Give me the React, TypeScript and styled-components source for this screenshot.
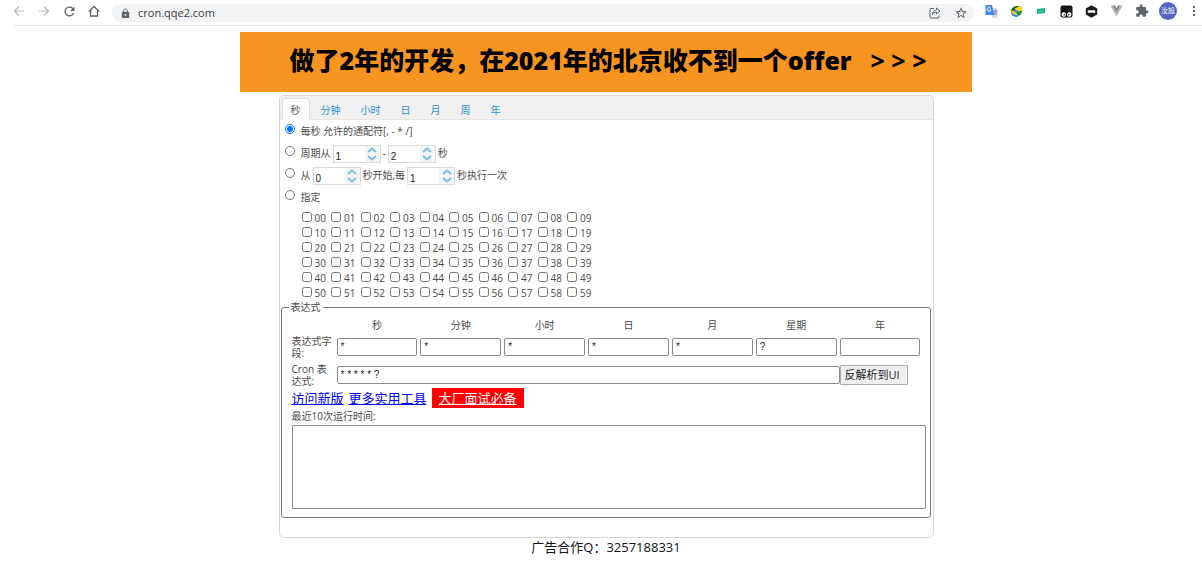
import React from "react";
import styled, { createGlobalStyle } from "styled-components";
import { MdExtension, MdLock, MdRefresh, MdStarOutline } from "react-icons/md";

const Global = createGlobalStyle`
  *, *::before, *::after { box-sizing: border-box; }
  body {
    margin: 0;
    background: #fff;
    color: #4a4a4a;
    font: 10px/12px "Open Sans", "Noto Sans CJK SC", sans-serif;
  }
  button, input, textarea { font: inherit; color: inherit; margin: 0; }
`;

const Toolbar = styled.header`
  display: flex;
  align-items: center;
  height: 26px;
  margin-left: 14px;
  padding-bottom: 3px;
  border-bottom: 1px solid #e6e6e8;
`;
const NavGroup = styled.nav`
  display: flex;
  gap: 9px;
  margin-left: -3px;
  width: 101px;
`;
const IconButton = styled.button<{ $color?: string }>`
  display: flex;
  align-items: center;
  justify-content: center;
  width: 16px;
  height: 16px;
  padding: 0;
  border: 0;
  background: none;
  color: ${(p) => p.$color ?? "#5f6368"};
`;
const AddressBar = styled.div`
  display: flex;
  align-items: center;
  flex: 1;
  height: 18px;
  margin-top: 4px;
  padding: 0 5px 0 8px;
  gap: 7px;
  border-radius: 7px 7px 9px 9px;
  background: #f1f3f4;
  color: #5f6368;
`;
const Address = styled.input`
  flex: 1;
  min-width: 0;
  height: 16px;
  padding: 0 0 2px;
  border: 0;
  outline: 0;
  background: none;
  color: #3c4043;
  font-size: 11px;
`;
const AddressActions = styled.div`
  display: flex;
  gap: 10px;
`;
const Extensions = styled.div`
  display: flex;
  align-items: center;
  justify-content: space-between;
  width: 219px;
  margin-left: 9px;
`;
const Avatar = styled.button`
  width: 18px;
  height: 18px;
  padding: 0;
  border: 0;
  border-radius: 50%;
  background: #5563c1;
  color: #fff;
  font-size: 7px;
  line-height: 18px;
`;

const Page = styled.main`
  display: flex;
  flex-direction: column;
  align-items: center;
  padding: 6px 0 12px 10px;
`;
const Banner = styled.a`
  display: flex;
  align-items: center;
  justify-content: center;
  gap: 19px;
  width: 100%;
  max-width: 732px;
  height: 60px;
  padding: 0 0 4px 4px;
  background: #f89520;
  color: #000;
  font: 800 25px/30px "Open Sans", "Noto Sans CJK SC", sans-serif;
  text-decoration: none;
  white-space: nowrap;
`;
const BannerArrows = styled.span`
  font-weight: 700;
`;
const Panel = styled.section`
  width: 100%;
  max-width: 655px;
  margin-top: 3px;
  padding-bottom: 19px;
  border: 1px solid #d8d8d8;
  border-radius: 5px;
`;
const Tabs = styled.div`
  display: flex;
  align-items: flex-end;
  height: 24px;
  padding-left: 1px;
  border-bottom: 1px solid #e4e4e4;
  border-radius: 4px 4px 0 0;
  background: #f0f0f0;
`;
const Tab = styled.button<{ $active: boolean }>`
  height: 22px;
  margin: 0 1px -1px;
  padding: 0 8px;
  border: 1px solid ${(p) => (p.$active ? "#ddd" : "transparent")};
  border-bottom: 0;
  border-radius: 4px 4px 0 0;
  background: ${(p) => (p.$active ? "#fff" : "none")};
  color: ${(p) => (p.$active ? "#555" : "#2a8fd0")};
`;
const Options = styled.div`
  padding: 0 5px;
`;
const Row = styled.div`
  display: flex;
  align-items: center;
  gap: 2px;
  height: 22px;
`;
const Radio = styled.input`
  width: 10px;
  height: 10px;
  && { margin: 0 4px 4px 0; }
`;
const SpinBox = styled.span`
  display: flex;
  width: 48px;
  height: 18px;
  margin-top: 2px;
  border: 1px solid #dcdcdc;
  background: #f5f5f5;
`;
const SpinInput = styled.input`
  flex: 1;
  min-width: 0;
  padding: 5px 0 0 2px;
  border: 0;
  background: #fff;
  color: #222;
  font-family: "Liberation Sans", sans-serif;
`;
const SpinButtons = styled.span`
  display: flex;
  flex-direction: column;
  width: 15px;
`;
const SpinButton = styled.button`
  display: flex;
  align-items: center;
  justify-content: center;
  height: 8px;
  padding: 0;
  border: 0;
  background: none;
`;
const Ticks = styled.div`
  display: grid;
  grid-template-columns: repeat(10, 1fr);
  width: 295px;
  margin: 2px 0 0 17px;
`;
const Tick = styled.label`
  display: flex;
  align-items: center;
  gap: 3px;
  height: 15px;
`;
const Check = styled.input`
  width: 10px;
  height: 10px;
  && { margin: 0 0 2px; }
`;

const Group = styled.fieldset`
  margin: 1px 2px 0 1px;
  padding: 6px 4px 8px 10px;
  border: 1px solid #777;
  border-radius: 3px;
`;
const Legend = styled.legend`
  margin-left: -3px;
  padding: 0 2px;
`;
const Fields = styled.div`
  display: grid;
  grid-template-columns: 42px repeat(7, 1fr);
  column-gap: 3px;
  align-items: end;
  margin-right: 5px;
`;
const Caption = styled.span`
  display: block;
  line-height: 12px;
`;
const Field = styled.label`
  display: flex;
  flex-direction: column;
  gap: 7px;
  padding-bottom: 3px;
  text-align: center;
`;
const Box = styled.input`
  width: 100%;
  height: 18px;
  padding: 0 3px 1px;
  border: 1px solid #8a8a8a;
  border-radius: 2px;
  background: #fff;
  color: #222;
  font-family: "Liberation Sans", sans-serif;
`;
const CronRow = styled.div`
  display: flex;
  align-items: center;
  margin: 4px 18px 0 0;
`;
const CronLabel = styled.label`
  flex: none;
  width: 36px;
  margin-right: 9px;
`;
const ParseButton = styled.button`
  flex: none;
  width: 68px;
  height: 20px;
  padding: 0 3px 1px 0;
  border: 1px solid #aaa;
  border-radius: 1px;
  background: #efefef;
  color: #222;
  font-size: 11px;
`;
const Links = styled.div`
  display: flex;
  align-items: center;
  gap: 5px;
  margin-top: 1px;
  font-size: 13px;
  line-height: 20px;
`;
const Link = styled.a<{ $hot?: boolean }>`
  padding: ${(p) => (p.$hot ? "0 7px" : "0")};
  background: ${(p) => (p.$hot ? "#f00" : "none")};
  color: ${(p) => (p.$hot ? "#fff" : "#00e")};
`;
const Runs = styled.label`
  display: block;
  margin-top: 2px;
`;
const RunList = styled.textarea`
  display: block;
  width: 100%;
  height: 84px;
  margin-top: 3px;
  border: 1px solid #8a8a8a;
  border-radius: 1px;
  resize: none;
`;
const Footer = styled.footer`
  color: #111;
  font-size: 13px;
  line-height: 18px;
`;

const Arrow = ({ back }: { back?: boolean }) => (
  <svg width="12" height="12" viewBox="0 0 12 12" fill="none" stroke="currentColor" strokeWidth="1.1">
    <path d={back ? "M11 6H1.5M6 1.5L1.5 6L6 10.5" : "M1 6h9.500M6 1.500L10.500 6L6 10.500"} />
  </svg>
);
const HomeIcon = () => (
  <svg width="12" height="12" viewBox="0 0 12 12" fill="none" stroke="currentColor" strokeWidth="1.300">
    <path d="M0.800 6.500L6 1.500L11.200 6.500M2.500 5.500V11H9.500V5.500" />
  </svg>
);
const ShareIcon = () => (
  <svg width="12" height="12" viewBox="0 0 12 12" fill="none" stroke="currentColor" strokeLinejoin="round">
    <path d="M5 1.500H2A1 1 0 0 0 1 2.500V10A1 1 0 0 0 2 11H9A1 1 0 0 0 10 10V8.500" />
    <path d="M7.500 1L11 4L7.500 7V5.200C5.500 5.200 4.200 6 3.300 7.600C3.500 5 5 3.100 7.500 2.900Z" />
  </svg>
);
const Translate = () => (
  <svg width="13" height="13" viewBox="0 0 13 13">
    <path d="M5 3h7.500v10H7.500z" fill="#d5d8dc" />
    <path d="M0.500 0h6.500l2.500 10h-9z" fill="#4688f1" />
    <path d="M6 4.800H4.300M5.800 3.300A2 2 0 1 0 6 5" fill="none" stroke="#fff" strokeWidth="0.900" />
    <path d="M8.500 6h4M10.500 5v1M11.500 6Q11 8.500 8.700 10M9.200 7.500L12 10" fill="none" stroke="#657080" strokeWidth="0.700" />
  </svg>
);
const Globe = () => (
  <svg width="13" height="13" viewBox="0 0 13 13">
    <circle cx="6" cy="7" r="5" fill="#3188c9" />
    <path d="M0.500 6C2 2 6 0 10 1.500L8 5L5 4L3.500 7Z" fill="#1d5a2c" />
    <path d="M4.500 3.500L11 0.500L12.800 5L9 7Z" fill="#f4d51f" />
    <path d="M0.500 5L5 6.500L8 10.500L3 9Z" fill="#efd331" />
    <path d="M7 7L12.500 5.500L11 9.500L8 10Z" fill="#2b8742" />
  </svg>
);
const Flag = () => (
  <svg width="10" height="8" viewBox="0 0 10 8">
    <path d="M1 2L9 1V6L1 7Z" fill="#16b57c" />
    <path d="M3 5.500L7 3.500" stroke="#8fe0c2" strokeWidth="0.800" />
  </svg>
);
const Monkey = () => (
  <svg width="13" height="13" viewBox="0 0 13 13">
    <rect x="0.500" y="0.500" width="12" height="12" rx="2" fill="#151515" />
    <circle cx="3.800" cy="9.500" r="2.200" fill="#fff" />
    <circle cx="9.200" cy="9.500" r="2.200" fill="#fff" />
    <circle cx="4.200" cy="9.800" r="0.800" fill="#151515" />
    <circle cx="8.800" cy="9.800" r="0.800" fill="#151515" />
  </svg>
);
const Blocker = () => (
  <svg width="13" height="13" viewBox="0 0 13 13">
    <path d="M6.500 0.300L12.200 3.500V9.500L6.500 12.700L0.800 9.500V3.500Z" fill="#1d1d1d" />
    <rect x="2.800" y="5.300" width="7.400" height="2.400" rx="0.500" fill="#fff" />
  </svg>
);
const Vee = () => (
  <svg width="13" height="12" viewBox="0 0 13 12">
    <path d="M0.500 0.500H4L6.500 5L9 0.500H12.500L6.500 11.500Z" fill="#b4b4b4" />
    <path d="M2.800 0.500H5L6.500 3L8 0.500H10.200L6.500 7Z" fill="#858585" />
  </svg>
);
const Dots = () => (
  <svg width="4" height="14" viewBox="0 0 4 14" fill="currentColor">
    <circle cx="2" cy="3" r="1.200" />
    <circle cx="2" cy="7" r="1.200" />
    <circle cx="2" cy="11" r="1.200" />
  </svg>
);
const Chevron = ({ up }: { up?: boolean }) => (
  <svg width="10" height="6" viewBox="0 0 10 6" fill="none" stroke="#77bdea" strokeWidth="2">
    <path d={up ? "M1 5L5 1.500L9 5" : "M1 1L5 4.500L9 1"} />
  </svg>
);

const Spinner = ({ label, value }: { label: string; value: string }) => (
  <SpinBox>
    <SpinInput aria-label={label} defaultValue={value} />
    <SpinButtons>
      <SpinButton type="button" aria-label="增加"><Chevron up /></SpinButton>
      <SpinButton type="button" aria-label="减少"><Chevron /></SpinButton>
    </SpinButtons>
  </SpinBox>
);

const tabs = ["秒", "分钟", "小时", "日", "月", "周", "年"];
const fields = [
  ["秒", "*"], ["分钟", "*"], ["小时", "*"], ["日", "*"], ["月", "*"], ["星期", "?"], ["年", ""],
];
const seconds = Array.from({ length: 60 }, (_, i) => String(i).padStart(2, "0"));

export default function App() {
  const [tab, setTab] = React.useState("秒");
  return (
    <>
      <Global />
      <Toolbar>
        <NavGroup>
          <IconButton aria-label="后退" $color="#b5b7ba"><Arrow back /></IconButton>
          <IconButton aria-label="前进" $color="#b5b7ba"><Arrow /></IconButton>
          <IconButton aria-label="刷新"><MdRefresh size={15} /></IconButton>
          <IconButton aria-label="主页"><HomeIcon /></IconButton>
        </NavGroup>
        <AddressBar>
          <MdLock size={11} />
          <Address aria-label="地址" defaultValue="cron.qqe2.com" />
          <AddressActions>
            <IconButton aria-label="分享"><ShareIcon /></IconButton>
            <IconButton aria-label="收藏"><MdStarOutline size={14} /></IconButton>
          </AddressActions>
        </AddressBar>
        <Extensions>
          <IconButton aria-label="翻译"><Translate /></IconButton>
          <IconButton aria-label="下载"><Globe /></IconButton>
          <IconButton aria-label="标记"><Flag /></IconButton>
          <IconButton aria-label="脚本"><Monkey /></IconButton>
          <IconButton aria-label="拦截"><Blocker /></IconButton>
          <IconButton aria-label="调试"><Vee /></IconButton>
          <IconButton aria-label="扩展"><MdExtension size={14} /></IconButton>
          <Avatar>汝旭</Avatar>
          <IconButton aria-label="菜单"><Dots /></IconButton>
        </Extensions>
      </Toolbar>
      <Page>
        <Banner href="#">
          <span>做了2年的开发，在2021年的北京收不到一个offer</span>
          <BannerArrows>&gt; &gt; &gt;</BannerArrows>
        </Banner>
        <Panel>
          <Tabs role="tablist">
            {tabs.map((t) => (
              <Tab key={t} role="tab" aria-selected={t === tab} $active={t === tab} onClick={() => setTab(t)}>{t}</Tab>
            ))}
          </Tabs>
          <Options>
            <Row>
              <Radio type="radio" name="mode" id="every" defaultChecked />
              <label htmlFor="every">每秒 允许的通配符[, - * /]</label>
            </Row>
            <Row>
              <Radio type="radio" name="mode" id="cycle" />
              <label htmlFor="cycle">周期从</label>
              <Spinner label="周期开始" value="1" />
              <span>-</span>
              <Spinner label="周期结束" value="2" />
              <span>秒</span>
            </Row>
            <Row>
              <Radio type="radio" name="mode" id="step" />
              <label htmlFor="step">从</label>
              <Spinner label="开始秒" value="0" />
              <span>秒开始,每</span>
              <Spinner label="间隔秒" value="1" />
              <span>秒执行一次</span>
            </Row>
            <Row>
              <Radio type="radio" name="mode" id="pick" />
              <label htmlFor="pick">指定</label>
            </Row>
            <Ticks>
              {seconds.map((s) => (
                <Tick key={s}><Check type="checkbox" />{s}</Tick>
              ))}
            </Ticks>
          </Options>
          <Group>
            <Legend>表达式</Legend>
            <Fields>
              <Caption>表达式字段:</Caption>
              {fields.map(([name, value]) => (
                <Field key={name}>{name}<Box defaultValue={value} /></Field>
              ))}
            </Fields>
            <CronRow>
              <CronLabel htmlFor="cron">Cron 表达式:</CronLabel>
              <Box id="cron" defaultValue="* * * * * ?" />
              <ParseButton type="button">反解析到UI</ParseButton>
            </CronRow>
            <Links>
              <Link href="#">访问新版</Link>
              <Link href="#">更多实用工具</Link>
              <Link href="#" $hot>大厂面试必备</Link>
            </Links>
            <Runs htmlFor="runs">最近10次运行时间:</Runs>
            <RunList id="runs" />
          </Group>
        </Panel>
        <Footer>广告合作Q：3257188331</Footer>
      </Page>
    </>
  );
}
